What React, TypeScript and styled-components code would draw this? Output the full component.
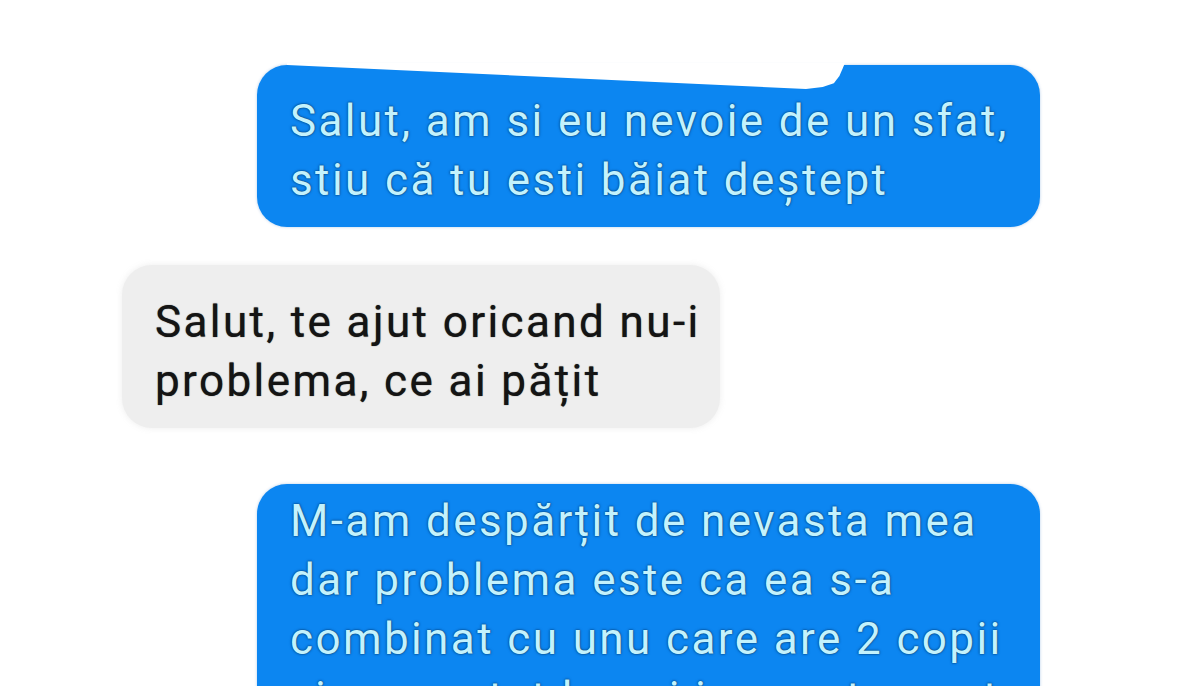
import React from "react";
import styled, { createGlobalStyle } from "styled-components";

const Global = createGlobalStyle`
  html, body { margin: 0; padding: 0; background: #ffffff; }
  body { width: 1200px; height: 686px; overflow: hidden; font-family: Roboto, "Liberation Sans", Arial, sans-serif; }
`;

const Thread = styled.div`
  width: 1200px;
  height: 686px;
  overflow: hidden;
  display: flex;
  flex-direction: column;
  padding-top: 65px;
  box-sizing: border-box;
  background: #fff;
`;

const Row = styled.div<{ $mine?: boolean; $gap: number }>`
  display: flex;
  margin-top: ${(p) => p.$gap}px;
  padding-left: ${(p) => (p.$mine ? 257 : 122)}px;
`;

const Bubble = styled.div<{ $mine?: boolean; $w: number; $pt: number; $pb: number }>`
  position: relative;
  width: ${(p) => p.$w}px;
  box-sizing: border-box;
  padding: ${(p) => p.$pt}px 10px ${(p) => p.$pb}px 33px;
  border-radius: 30px;
  background: ${(p) => (p.$mine ? "#0c86f1" : "#eeeeee")};
  color: ${(p) => (p.$mine ? "#c3f2fd" : "#141414")};
  font-family: Roboto, "Liberation Sans", Arial, sans-serif;
  font-size: 44px;
  line-height: 59px;
  letter-spacing: 2.4px;
  white-space: nowrap;
  text-shadow: ${(p) =>
    p.$mine
      ? "0 0 1.5px rgba(0, 40, 80, 0.95), 0 0 3px rgba(0, 55, 110, 0.6)"
      : "0 0 1px rgba(0,0,0,0.75)"};
  box-shadow: ${(p) => (p.$mine ? "0 0 3px rgba(40, 110, 190, 0.35)" : "0 0 6px rgba(235,235,235,0.9)")};
`;

const Notch = styled.div`
  position: absolute;
  left: 30px;
  top: -2px;
  width: 558px;
  height: 26px;
  background: #ffffff;
  clip-path: polygon(0 0, 100% 0, 99% 50%, 98% 78%, 96% 92%, 93% 100%, 0 8%);
`;

const Line = styled.div``;

export default function App() {
  return (
    <>
      <Global />
      <Thread>
        <Row $mine $gap={0}>
          <Bubble $mine $w={783} $pt={27} $pb={17}>
            <Notch />
            <Line>Salut, am si eu nevoie de un sfat,</Line>
            <Line>stiu că tu esti băiat deștept</Line>
          </Bubble>
        </Row>
        <Row $gap={38}>
          <Bubble $w={598} $pt={28} $pb={17}>
            <Line>Salut, te ajut oricand nu-i</Line>
            <Line>problema, ce ai pățit</Line>
          </Bubble>
        </Row>
        <Row $mine $gap={56}>
          <Bubble $mine $w={783} $pt={8} $pb={20}>
            <Line>M-am despărțit de nevasta mea</Line>
            <Line>dar problema este ca ea s-a</Line>
            <Line>combinat cu unu care are 2 copii</Line>
            <Line>si s-a mutat la noi in apartament</Line>
          </Bubble>
        </Row>
      </Thread>
    </>
  );
}
